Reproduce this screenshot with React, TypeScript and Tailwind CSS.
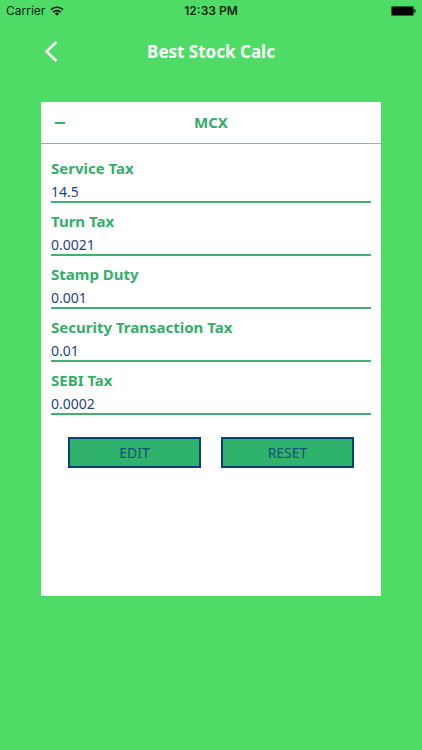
import React, { useState } from "react";

type Tax = { id: string; label: string; value: string };

const DEFAULT_TAXES: Tax[] = [
  { id: "service", label: "Service Tax", value: "14.5" },
  { id: "turn", label: "Turn Tax", value: "0.0021" },
  { id: "stamp", label: "Stamp Duty", value: "0.001" },
  { id: "security", label: "Security Transaction Tax", value: "0.01" },
  { id: "sebi", label: "SEBI Tax", value: "0.0002" },
];

function StatusBar() {
  return (
    <div className="grid h-[22px] grid-cols-3 items-center px-1.5 font-['Inter',sans-serif] text-xs text-[#0b2410]">
      <div className="flex items-center gap-[5px]">
        <span>Carrier</span>
        <svg width="14" height="10" viewBox="0 0 14 10" fill="none" stroke="#04140a" strokeWidth="1.7" aria-hidden="true">
          <path d="M1 3.7a8.6 8.6 0 0 1 12 0" />
          <path d="M3.2 6.1a5.4 5.4 0 0 1 7.6 0" />
          <path d="M7 9.7 4.9 7.6a3 3 0 0 1 4.2 0z" fill="#04140a" stroke="none" />
        </svg>
      </div>
      <span className="text-center font-semibold">12:33 PM</span>
      <svg className="justify-self-end" width="26" height="10" viewBox="0 0 26 10" aria-hidden="true">
        <rect x="1.5" y="0.5" width="22" height="9" rx="1" fill="#000" stroke="#1c6b2d" />
        <path d="M24 3.2h1.5v3.6h-1.5z" fill="#0a3313" />
      </svg>
    </div>
  );
}

function TaxField({ tax, readOnly, onChange }: { tax: Tax; readOnly: boolean; onChange: (value: string) => void }) {
  return (
    <div className="flex flex-col border-b-2 border-[#41b173] pt-1.5">
      <label htmlFor={tax.id} className="text-[15px] leading-6 font-bold text-[#34ae69]">
        {tax.label}
      </label>
      <input
        id={tax.id}
        className="h-[21px] w-full bg-transparent pt-px text-sm text-[#1c4480] outline-none"
        value={tax.value}
        readOnly={readOnly}
        onChange={(e) => onChange(e.target.value)}
      />
    </div>
  );
}

export default function App() {
  const [taxes, setTaxes] = useState(DEFAULT_TAXES);
  const [editing, setEditing] = useState(false);
  const button = "h-[31px] flex-1 border-2 border-[#0b4070] bg-[#2fb26b] text-sm text-[#0d5475]";

  return (
    <div className="min-h-screen bg-[#4fdc66] font-['Noto_Sans',sans-serif]">
      <StatusBar />
      <header className="grid h-[60px] grid-cols-[1fr_auto_1fr] items-center px-11">
        <button type="button" aria-label="Back" className="justify-self-start">
          <svg width="14" height="22" viewBox="0 0 14 22" fill="none" stroke="#f1fff3" strokeWidth="2.6" aria-hidden="true">
            <path d="M12.5 .8 2.5 10.5l10 9.7" />
          </svg>
        </button>
        <h1 className="text-[17px] font-bold text-white">Best Stock Calc</h1>
      </header>
      <main className="mx-[41px] mt-5 bg-white pb-32">
        <div className="grid h-[42px] grid-cols-[1fr_auto_1fr] items-center border-b border-b-[#5fd67c] px-3.5">
          <button type="button" aria-label="Collapse" className="flex h-5 w-[10px] items-center">
            <span className="h-0.5 w-full bg-[#34ae69]" />
          </button>
          <h2 className="text-[15px] font-bold text-[#34ae69]">MCX</h2>
        </div>
        <div className="px-2.5 pt-1.5">
          {taxes.map((tax) => (
            <TaxField
              key={tax.id}
              tax={tax}
              readOnly={!editing}
              onChange={(value) => setTaxes(taxes.map((t) => (t.id === tax.id ? { ...t, value } : t)))}
            />
          ))}
        </div>
        <div className="mt-[22px] flex gap-5 px-[27px]">
          <button type="button" className={button} onClick={() => setEditing(true)}>
            EDIT
          </button>
          <button type="button" className={button} onClick={() => setTaxes(DEFAULT_TAXES)}>
            RESET
          </button>
        </div>
      </main>
    </div>
  );
}
